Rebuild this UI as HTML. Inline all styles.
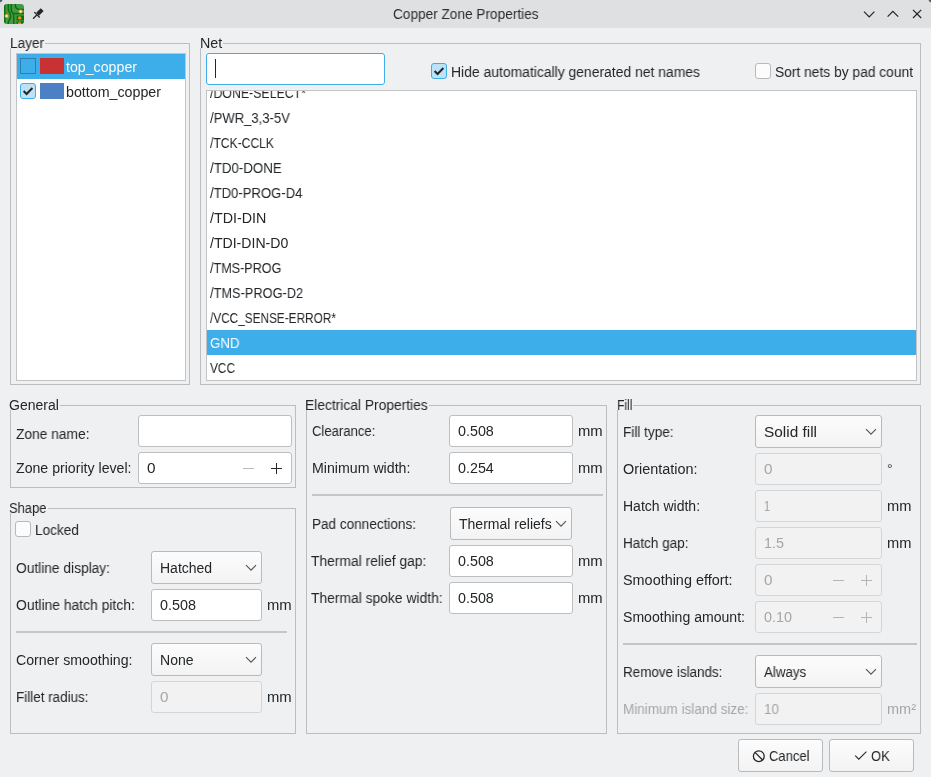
<!DOCTYPE html>
<html><head><meta charset="utf-8"><style>
html,body{margin:0;padding:0;width:931px;height:777px;overflow:hidden;background:#eff0f1;font-family:"Liberation Sans",sans-serif;position:relative;-webkit-font-smoothing:antialiased}
.t{will-change:transform}
</style></head><body>
<div style="position:absolute;left:0px;top:0px;width:931px;height:28px;box-sizing:border-box;background:#dee0e2"></div>
<div class="t" style="position:absolute;left:392.50px;top:6.00px;line-height:16px;font-size:14px;color:#2b2e31;white-space:pre;transform:scaleX(0.9738);transform-origin:0 0;">Copper Zone Properties</div>
<div style="position:absolute;left:10px;top:43px;width:180px;height:342px;box-sizing:border-box;border:1px solid #bcbdbf;"></div>
<div style="position:absolute;left:9px;top:37px;width:36px;height:11px;box-sizing:border-box;background:#eff0f1"></div>
<div class="t" style="position:absolute;left:9.50px;top:35.00px;line-height:16px;font-size:14px;color:#232629;white-space:pre;transform:scaleX(0.9763);transform-origin:0 0;">Layer</div>
<div style="position:absolute;left:200px;top:43px;width:721px;height:342px;box-sizing:border-box;border:1px solid #bcbdbf;"></div>
<div style="position:absolute;left:199px;top:37px;width:24px;height:11px;box-sizing:border-box;background:#eff0f1"></div>
<div class="t" style="position:absolute;left:199.90px;top:35.00px;line-height:16px;font-size:14px;color:#232629;white-space:pre;transform:scaleX(1.0185);transform-origin:0 0;">Net</div>
<div style="position:absolute;left:10px;top:405px;width:286px;height:83px;box-sizing:border-box;border:1px solid #bcbdbf;"></div>
<div style="position:absolute;left:9px;top:399px;width:51px;height:11px;box-sizing:border-box;background:#eff0f1"></div>
<div class="t" style="position:absolute;left:9.20px;top:397.00px;line-height:16px;font-size:14px;color:#232629;white-space:pre;transform:scaleX(0.9937);transform-origin:0 0;">General</div>
<div style="position:absolute;left:10px;top:508px;width:286px;height:226px;box-sizing:border-box;border:1px solid #bcbdbf;"></div>
<div style="position:absolute;left:9px;top:502px;width:39px;height:11px;box-sizing:border-box;background:#eff0f1"></div>
<div class="t" style="position:absolute;left:9.20px;top:500.00px;line-height:16px;font-size:14px;color:#232629;white-space:pre;transform:scaleX(0.9238);transform-origin:0 0;">Shape</div>
<div style="position:absolute;left:306px;top:405px;width:301px;height:329px;box-sizing:border-box;border:1px solid #bcbdbf;"></div>
<div style="position:absolute;left:305px;top:399px;width:124px;height:11px;box-sizing:border-box;background:#eff0f1"></div>
<div class="t" style="position:absolute;left:305.30px;top:397.00px;line-height:16px;font-size:14px;color:#232629;white-space:pre;transform:scaleX(0.9855);transform-origin:0 0;">Electrical Properties</div>
<div style="position:absolute;left:617px;top:405px;width:304px;height:329px;box-sizing:border-box;border:1px solid #bcbdbf;"></div>
<div style="position:absolute;left:616px;top:399px;width:17px;height:11px;box-sizing:border-box;background:#eff0f1"></div>
<div class="t" style="position:absolute;left:616.80px;top:397.00px;line-height:16px;font-size:14px;color:#232629;white-space:pre;transform:scaleX(0.8608);transform-origin:0 0;">Fill</div>
<div style="position:absolute;left:16px;top:53px;width:170px;height:328px;box-sizing:border-box;background:#fff;border:1px solid #c3c4c6"></div>
<div style="position:absolute;left:17px;top:54px;width:168px;height:25px;box-sizing:border-box;background:#3daee9"></div>
<div style="position:absolute;left:20px;top:58px;width:16px;height:16px;box-sizing:border-box;border:1px solid #2e7fb0;"></div>
<div style="position:absolute;left:40px;top:58px;width:24px;height:16px;box-sizing:border-box;background:#c83232"></div>
<div class="t" style="position:absolute;left:65.90px;top:59.00px;line-height:16px;font-size:14px;color:#fcfcfc;white-space:pre;transform:scaleX(1.0134);transform-origin:0 0;">top_copper</div>
<div style="position:absolute;left:20px;top:83px;width:16px;height:16px;box-sizing:border-box;background:#bde2f6;border:1px solid #3daee9;border-radius:3px"></div><svg style="position:absolute;left:20px;top:83px" width="16" height="16" viewBox="0 0 16 16"><path d="M3.6 8 L6.6 11 L12.4 5" fill="none" stroke="#232629" stroke-width="2"/></svg>
<div style="position:absolute;left:40px;top:83px;width:24px;height:16px;box-sizing:border-box;background:#4d7fc4"></div>
<div class="t" style="position:absolute;left:65.90px;top:84.00px;line-height:16px;font-size:14px;color:#232629;white-space:pre;transform:scaleX(1.0171);transform-origin:0 0;">bottom_copper</div>
<div style="position:absolute;left:206px;top:53px;width:179px;height:32px;box-sizing:border-box;background:#fff;border:1px solid #3daee9;border-radius:3px"></div>
<div style="position:absolute;left:215px;top:59px;width:1px;height:19px;box-sizing:border-box;background:#232629"></div>
<div style="position:absolute;left:431px;top:63px;width:16px;height:16px;box-sizing:border-box;background:#bde2f6;border:1px solid #3daee9;border-radius:3px"></div><svg style="position:absolute;left:431px;top:63px" width="16" height="16" viewBox="0 0 16 16"><path d="M3.6 8 L6.6 11 L12.4 5" fill="none" stroke="#232629" stroke-width="2"/></svg>
<div class="t" style="position:absolute;left:451.30px;top:64.00px;line-height:16px;font-size:14px;color:#232629;white-space:pre;transform:scaleX(0.9936);transform-origin:0 0;">Hide automatically generated net names</div>
<div style="position:absolute;left:755px;top:63px;width:16px;height:16px;box-sizing:border-box;background:#fcfcfc;border:1px solid #b8b9bb;border-radius:3px"></div>
<div class="t" style="position:absolute;left:775.00px;top:64.00px;line-height:16px;font-size:14px;color:#232629;white-space:pre;transform:scaleX(0.9851);transform-origin:0 0;">Sort nets by pad count</div>
<div style="position:absolute;left:206px;top:90px;width:711px;height:291px;box-sizing:border-box;background:#fff;border:1px solid #c3c4c6"></div>
<div style="position:absolute;left:207px;top:91px;width:709px;height:289px;overflow:hidden">
<div class="t" style="position:absolute;left:2.50px;top:-6.00px;line-height:16px;font-size:14px;color:#232629;white-space:pre;transform:scaleX(0.8814);transform-origin:0 0;">/DONE-SELECT*</div>
<div class="t" style="position:absolute;left:2.50px;top:19.00px;line-height:16px;font-size:14px;color:#232629;white-space:pre;transform:scaleX(0.9335);transform-origin:0 0;">/PWR_3,3-5V</div>
<div class="t" style="position:absolute;left:2.50px;top:44.00px;line-height:16px;font-size:14px;color:#232629;white-space:pre;transform:scaleX(0.8660);transform-origin:0 0;">/TCK-CCLK</div>
<div class="t" style="position:absolute;left:2.50px;top:69.00px;line-height:16px;font-size:14px;color:#232629;white-space:pre;transform:scaleX(0.9516);transform-origin:0 0;">/TD0-DONE</div>
<div class="t" style="position:absolute;left:2.50px;top:94.00px;line-height:16px;font-size:14px;color:#232629;white-space:pre;transform:scaleX(0.9353);transform-origin:0 0;">/TD0-PROG-D4</div>
<div class="t" style="position:absolute;left:2.50px;top:119.00px;line-height:16px;font-size:14px;color:#232629;white-space:pre;transform:scaleX(1.0196);transform-origin:0 0;">/TDI-DIN</div>
<div class="t" style="position:absolute;left:2.50px;top:144.00px;line-height:16px;font-size:14px;color:#232629;white-space:pre;transform:scaleX(1.0067);transform-origin:0 0;">/TDI-DIN-D0</div>
<div class="t" style="position:absolute;left:2.50px;top:169.00px;line-height:16px;font-size:14px;color:#232629;white-space:pre;transform:scaleX(0.8999);transform-origin:0 0;">/TMS-PROG</div>
<div class="t" style="position:absolute;left:2.50px;top:194.00px;line-height:16px;font-size:14px;color:#232629;white-space:pre;transform:scaleX(0.9147);transform-origin:0 0;">/TMS-PROG-D2</div>
<div class="t" style="position:absolute;left:2.50px;top:219.00px;line-height:16px;font-size:14px;color:#232629;white-space:pre;transform:scaleX(0.8428);transform-origin:0 0;">/VCC_SENSE-ERROR*</div>
<div style="position:absolute;left:0px;top:239px;width:709px;height:25px;box-sizing:border-box;background:#3daee9"></div>
<div class="t" style="position:absolute;left:2.50px;top:244.00px;line-height:16px;font-size:14px;color:#fcfcfc;white-space:pre;transform:scaleX(0.9478);transform-origin:0 0;">GND</div>
<div class="t" style="position:absolute;left:2.50px;top:269.00px;line-height:16px;font-size:14px;color:#232629;white-space:pre;transform:scaleX(0.8457);transform-origin:0 0;">VCC</div>
</div>
<div class="t" style="position:absolute;left:15.80px;top:426.00px;line-height:16px;font-size:14px;color:#232629;white-space:pre;transform:scaleX(0.9850);transform-origin:0 0;">Zone name:</div>
<div style="position:absolute;left:138px;top:415px;width:154px;height:32px;box-sizing:border-box;background:#fff;border:1px solid #bdbec0;border-radius:3px"></div>
<div class="t" style="position:absolute;left:15.80px;top:460.00px;line-height:16px;font-size:14px;color:#232629;white-space:pre;transform:scaleX(1.0097);transform-origin:0 0;">Zone priority level:</div>
<div style="position:absolute;left:138px;top:452px;width:154px;height:32px;box-sizing:border-box;background:#fff;border:1px solid #bdbec0;border-radius:3px"></div>
<div class="t" style="position:absolute;left:146.90px;top:460.00px;line-height:16px;font-size:14px;color:#232629;white-space:pre;transform:scaleX(1.0902);transform-origin:0 0;">0</div>
<div style="position:absolute;left:243px;top:468px;width:11px;height:1px;box-sizing:border-box;background:#b9babc"></div>
<div style="position:absolute;left:271px;top:468px;width:11px;height:1px;box-sizing:border-box;background:#232629"></div>
<div style="position:absolute;left:276px;top:463px;width:1px;height:11px;box-sizing:border-box;background:#232629"></div>
<div style="position:absolute;left:15px;top:521px;width:16px;height:16px;box-sizing:border-box;background:#fcfcfc;border:1px solid #b8b9bb;border-radius:3px"></div>
<div class="t" style="position:absolute;left:35.10px;top:522.00px;line-height:16px;font-size:14px;color:#232629;white-space:pre;transform:scaleX(0.9744);transform-origin:0 0;">Locked</div>
<div class="t" style="position:absolute;left:16.20px;top:560.00px;line-height:16px;font-size:14px;color:#232629;white-space:pre;transform:scaleX(0.9820);transform-origin:0 0;">Outline display:</div>
<div style="position:absolute;left:151px;top:551px;width:111px;height:33px;box-sizing:border-box;background:linear-gradient(#fcfcfc,#f3f3f4);border:1px solid #b9babc;border-radius:3px"></div>
<div class="t" style="position:absolute;left:159.80px;top:560.00px;line-height:16px;font-size:14px;color:#232629;white-space:pre;transform:scaleX(0.9970);transform-origin:0 0;">Hatched</div>
<svg style="position:absolute;left:245px;top:564px" width="12" height="8" viewBox="0 0 12 8"><path d="M1 1.2 L6 6.2 L11 1.2" fill="none" stroke="#55585b" stroke-width="1.2"/></svg>
<div class="t" style="position:absolute;left:16.00px;top:597.00px;line-height:16px;font-size:14px;color:#232629;white-space:pre;transform:scaleX(0.9912);transform-origin:0 0;">Outline hatch pitch:</div>
<div style="position:absolute;left:151px;top:589px;width:111px;height:32px;box-sizing:border-box;background:#fff;border:1px solid #bdbec0;border-radius:3px"></div>
<div class="t" style="position:absolute;left:159.90px;top:597.00px;line-height:16px;font-size:14px;color:#232629;white-space:pre;transform:scaleX(1.0272);transform-origin:0 0;">0.508</div>
<div class="t" style="position:absolute;left:266.70px;top:597.00px;line-height:16px;font-size:14px;color:#232629;white-space:pre;transform:scaleX(1.0588);transform-origin:0 0;">mm</div>
<div style="position:absolute;left:16px;top:631px;width:271px;height:2px;box-sizing:border-box;background:#c4c5c7"></div>
<div class="t" style="position:absolute;left:16.00px;top:652.00px;line-height:16px;font-size:14px;color:#232629;white-space:pre;transform:scaleX(1.0115);transform-origin:0 0;">Corner smoothing:</div>
<div style="position:absolute;left:151px;top:643px;width:111px;height:33px;box-sizing:border-box;background:linear-gradient(#fcfcfc,#f3f3f4);border:1px solid #b9babc;border-radius:3px"></div>
<div class="t" style="position:absolute;left:159.80px;top:652.00px;line-height:16px;font-size:14px;color:#232629;white-space:pre;transform:scaleX(1.0039);transform-origin:0 0;">None</div>
<svg style="position:absolute;left:245px;top:656px" width="12" height="8" viewBox="0 0 12 8"><path d="M1 1.2 L6 6.2 L11 1.2" fill="none" stroke="#55585b" stroke-width="1.2"/></svg>
<div class="t" style="position:absolute;left:16.00px;top:689.00px;line-height:16px;font-size:14px;color:#232629;white-space:pre;transform:scaleX(0.9607);transform-origin:0 0;">Fillet radius:</div>
<div style="position:absolute;left:151px;top:681px;width:111px;height:32px;box-sizing:border-box;background:#f2f2f3;border:1px solid #d4d5d7;border-radius:3px"></div>
<div class="t" style="position:absolute;left:159.90px;top:689.00px;line-height:16px;font-size:14px;color:#a4a6a8;white-space:pre;transform:scaleX(1.0902);transform-origin:0 0;">0</div>
<div class="t" style="position:absolute;left:266.70px;top:689.00px;line-height:16px;font-size:14px;color:#232629;white-space:pre;transform:scaleX(1.0588);transform-origin:0 0;">mm</div>
<div class="t" style="position:absolute;left:312.10px;top:423.00px;line-height:16px;font-size:14px;color:#232629;white-space:pre;transform:scaleX(0.9350);transform-origin:0 0;">Clearance:</div>
<div style="position:absolute;left:449px;top:415px;width:124px;height:32px;box-sizing:border-box;background:#fff;border:1px solid #bdbec0;border-radius:3px"></div>
<div class="t" style="position:absolute;left:457.90px;top:423.00px;line-height:16px;font-size:14px;color:#232629;white-space:pre;transform:scaleX(1.0215);transform-origin:0 0;">0.508</div>
<div class="t" style="position:absolute;left:577.70px;top:423.00px;line-height:16px;font-size:14px;color:#232629;white-space:pre;transform:scaleX(1.0588);transform-origin:0 0;">mm</div>
<div class="t" style="position:absolute;left:312.10px;top:460.00px;line-height:16px;font-size:14px;color:#232629;white-space:pre;transform:scaleX(1.0118);transform-origin:0 0;">Minimum width:</div>
<div style="position:absolute;left:449px;top:452px;width:124px;height:32px;box-sizing:border-box;background:#fff;border:1px solid #bdbec0;border-radius:3px"></div>
<div class="t" style="position:absolute;left:457.90px;top:460.00px;line-height:16px;font-size:14px;color:#232629;white-space:pre;transform:scaleX(1.0215);transform-origin:0 0;">0.254</div>
<div class="t" style="position:absolute;left:577.70px;top:460.00px;line-height:16px;font-size:14px;color:#232629;white-space:pre;transform:scaleX(1.0588);transform-origin:0 0;">mm</div>
<div style="position:absolute;left:312px;top:494px;width:291px;height:2px;box-sizing:border-box;background:#c4c5c7"></div>
<div class="t" style="position:absolute;left:311.80px;top:516.00px;line-height:16px;font-size:14px;color:#232629;white-space:pre;transform:scaleX(0.9683);transform-origin:0 0;">Pad connections:</div>
<div style="position:absolute;left:450px;top:507px;width:122px;height:33px;box-sizing:border-box;background:linear-gradient(#fcfcfc,#f3f3f4);border:1px solid #b9babc;border-radius:3px"></div>
<div class="t" style="position:absolute;left:458.80px;top:516.00px;line-height:16px;font-size:14px;color:#232629;white-space:pre;transform:scaleX(1.0022);transform-origin:0 0;">Thermal reliefs</div>
<svg style="position:absolute;left:555px;top:520px" width="12" height="8" viewBox="0 0 12 8"><path d="M1 1.2 L6 6.2 L11 1.2" fill="none" stroke="#55585b" stroke-width="1.2"/></svg>
<div class="t" style="position:absolute;left:311.20px;top:553.00px;line-height:16px;font-size:14px;color:#232629;white-space:pre;transform:scaleX(0.9878);transform-origin:0 0;">Thermal relief gap:</div>
<div style="position:absolute;left:449px;top:545px;width:124px;height:32px;box-sizing:border-box;background:#fff;border:1px solid #bdbec0;border-radius:3px"></div>
<div class="t" style="position:absolute;left:457.90px;top:553.00px;line-height:16px;font-size:14px;color:#232629;white-space:pre;transform:scaleX(1.0215);transform-origin:0 0;">0.508</div>
<div class="t" style="position:absolute;left:577.70px;top:553.00px;line-height:16px;font-size:14px;color:#232629;white-space:pre;transform:scaleX(1.0588);transform-origin:0 0;">mm</div>
<div class="t" style="position:absolute;left:311.20px;top:590.00px;line-height:16px;font-size:14px;color:#232629;white-space:pre;transform:scaleX(0.9890);transform-origin:0 0;">Thermal spoke width:</div>
<div style="position:absolute;left:449px;top:582px;width:124px;height:32px;box-sizing:border-box;background:#fff;border:1px solid #bdbec0;border-radius:3px"></div>
<div class="t" style="position:absolute;left:457.90px;top:590.00px;line-height:16px;font-size:14px;color:#232629;white-space:pre;transform:scaleX(1.0215);transform-origin:0 0;">0.508</div>
<div class="t" style="position:absolute;left:577.70px;top:590.00px;line-height:16px;font-size:14px;color:#232629;white-space:pre;transform:scaleX(1.0588);transform-origin:0 0;">mm</div>
<div class="t" style="position:absolute;left:623.00px;top:424.00px;line-height:16px;font-size:14px;color:#232629;white-space:pre;transform:scaleX(0.9688);transform-origin:0 0;">Fill type:</div>
<div style="position:absolute;left:755px;top:415px;width:127px;height:33px;box-sizing:border-box;background:linear-gradient(#fcfcfc,#f3f3f4);border:1px solid #b9babc;border-radius:3px"></div>
<div class="t" style="position:absolute;left:763.80px;top:424.00px;line-height:16px;font-size:14px;color:#232629;white-space:pre;transform:scaleX(1.0984);transform-origin:0 0;">Solid fill</div>
<svg style="position:absolute;left:865px;top:428px" width="12" height="8" viewBox="0 0 12 8"><path d="M1 1.2 L6 6.2 L11 1.2" fill="none" stroke="#55585b" stroke-width="1.2"/></svg>
<div class="t" style="position:absolute;left:623.00px;top:461.00px;line-height:16px;font-size:14px;color:#232629;white-space:pre;transform:scaleX(1.0307);transform-origin:0 0;">Orientation:</div>
<div style="position:absolute;left:755px;top:453px;width:127px;height:32px;box-sizing:border-box;background:#f2f2f3;border:1px solid #d4d5d7;border-radius:3px"></div>
<div class="t" style="position:absolute;left:763.90px;top:461.00px;line-height:16px;font-size:14px;color:#a4a6a8;white-space:pre;transform:scaleX(1.0902);transform-origin:0 0;">0</div>
<div class="t" style="position:absolute;left:887.20px;top:461.00px;line-height:16px;font-size:14px;color:#3a3d40;white-space:pre;">°</div>
<div class="t" style="position:absolute;left:623.00px;top:498.00px;line-height:16px;font-size:14px;color:#232629;white-space:pre;transform:scaleX(0.9942);transform-origin:0 0;">Hatch width:</div>
<div style="position:absolute;left:755px;top:490px;width:127px;height:32px;box-sizing:border-box;background:#f2f2f3;border:1px solid #d4d5d7;border-radius:3px"></div>
<div class="t" style="position:absolute;left:763.90px;top:498.00px;line-height:16px;font-size:14px;color:#a4a6a8;white-space:pre;transform:scaleX(0.7695);transform-origin:0 0;">1</div>
<div class="t" style="position:absolute;left:886.80px;top:498.00px;line-height:16px;font-size:14px;color:#232629;white-space:pre;transform:scaleX(1.0459);transform-origin:0 0;">mm</div>
<div class="t" style="position:absolute;left:623.00px;top:535.00px;line-height:16px;font-size:14px;color:#232629;white-space:pre;transform:scaleX(0.9672);transform-origin:0 0;">Hatch gap:</div>
<div style="position:absolute;left:755px;top:527px;width:127px;height:32px;box-sizing:border-box;background:#f2f2f3;border:1px solid #d4d5d7;border-radius:3px"></div>
<div class="t" style="position:absolute;left:763.90px;top:535.00px;line-height:16px;font-size:14px;color:#a4a6a8;white-space:pre;transform:scaleX(1.0273);transform-origin:0 0;">1.5</div>
<div class="t" style="position:absolute;left:886.80px;top:535.00px;line-height:16px;font-size:14px;color:#232629;white-space:pre;transform:scaleX(1.0459);transform-origin:0 0;">mm</div>
<div class="t" style="position:absolute;left:623.00px;top:572.00px;line-height:16px;font-size:14px;color:#232629;white-space:pre;transform:scaleX(1.0294);transform-origin:0 0;">Smoothing effort:</div>
<div style="position:absolute;left:755px;top:564px;width:127px;height:32px;box-sizing:border-box;background:#f2f2f3;border:1px solid #d4d5d7;border-radius:3px"></div>
<div class="t" style="position:absolute;left:763.90px;top:572.00px;line-height:16px;font-size:14px;color:#a4a6a8;white-space:pre;transform:scaleX(1.0902);transform-origin:0 0;">0</div>
<div style="position:absolute;left:833px;top:580px;width:11px;height:1px;box-sizing:border-box;background:#b3b4b6"></div>
<div style="position:absolute;left:861px;top:580px;width:11px;height:1px;box-sizing:border-box;background:#b3b4b6"></div>
<div style="position:absolute;left:866px;top:575px;width:1px;height:11px;box-sizing:border-box;background:#b3b4b6"></div>
<div class="t" style="position:absolute;left:623.00px;top:609.00px;line-height:16px;font-size:14px;color:#232629;white-space:pre;transform:scaleX(1.0049);transform-origin:0 0;">Smoothing amount:</div>
<div style="position:absolute;left:755px;top:601px;width:127px;height:32px;box-sizing:border-box;background:#f2f2f3;border:1px solid #d4d5d7;border-radius:3px"></div>
<div class="t" style="position:absolute;left:763.90px;top:609.00px;line-height:16px;font-size:14px;color:#a4a6a8;white-space:pre;transform:scaleX(1.0275);transform-origin:0 0;">0.10</div>
<div style="position:absolute;left:833px;top:617px;width:11px;height:1px;box-sizing:border-box;background:#b3b4b6"></div>
<div style="position:absolute;left:861px;top:617px;width:11px;height:1px;box-sizing:border-box;background:#b3b4b6"></div>
<div style="position:absolute;left:866px;top:612px;width:1px;height:11px;box-sizing:border-box;background:#b3b4b6"></div>
<div style="position:absolute;left:623px;top:643px;width:294px;height:2px;box-sizing:border-box;background:#c4c5c7"></div>
<div class="t" style="position:absolute;left:622.60px;top:664.00px;line-height:16px;font-size:14px;color:#232629;white-space:pre;transform:scaleX(0.9614);transform-origin:0 0;">Remove islands:</div>
<div style="position:absolute;left:755px;top:655px;width:127px;height:33px;box-sizing:border-box;background:linear-gradient(#fcfcfc,#f3f3f4);border:1px solid #b9babc;border-radius:3px"></div>
<div class="t" style="position:absolute;left:763.80px;top:664.00px;line-height:16px;font-size:14px;color:#232629;white-space:pre;transform:scaleX(0.9536);transform-origin:0 0;">Always</div>
<svg style="position:absolute;left:865px;top:668px" width="12" height="8" viewBox="0 0 12 8"><path d="M1 1.2 L6 6.2 L11 1.2" fill="none" stroke="#55585b" stroke-width="1.2"/></svg>
<div class="t" style="position:absolute;left:622.60px;top:701.00px;line-height:16px;font-size:14px;color:#a4a6a8;white-space:pre;transform:scaleX(0.9651);transform-origin:0 0;">Minimum island size:</div>
<div style="position:absolute;left:755px;top:693px;width:127px;height:32px;box-sizing:border-box;background:#f2f2f3;border:1px solid #d4d5d7;border-radius:3px"></div>
<div class="t" style="position:absolute;left:763.90px;top:701.00px;line-height:16px;font-size:14px;color:#a4a6a8;white-space:pre;transform:scaleX(0.9629);transform-origin:0 0;">10</div>
<div class="t" style="position:absolute;left:886.80px;top:701.00px;line-height:16px;font-size:14px;color:#a4a6a8;white-space:pre;transform:scaleX(1.0357);transform-origin:0 0;">mm²</div>
<div style="position:absolute;left:738px;top:739px;width:85px;height:33px;box-sizing:border-box;background:linear-gradient(#fcfcfc,#f3f3f4);border:1px solid #b9babc;border-radius:3px"></div>
<div style="position:absolute;left:829px;top:739px;width:85px;height:33px;box-sizing:border-box;background:linear-gradient(#fcfcfc,#f3f3f4);border:1px solid #b9babc;border-radius:3px"></div>
<svg style="position:absolute;left:752px;top:750px" width="14" height="13" viewBox="0 0 14 13"><circle cx="6.8" cy="6.2" r="5.4" fill="none" stroke="#232629" stroke-width="1.3"/><path d="M3 2.4 L10.6 10" stroke="#232629" stroke-width="1.3"/></svg>
<div class="t" style="position:absolute;left:768.80px;top:748.00px;line-height:16px;font-size:14px;color:#232629;white-space:pre;transform:scaleX(0.9290);transform-origin:0 0;">Cancel</div>
<svg style="position:absolute;left:854px;top:750px" width="14" height="12" viewBox="0 0 14 12"><path d="M1.2 5.6 L4.8 9.2 L12.4 1.6" fill="none" stroke="#232629" stroke-width="1.05"/></svg>
<div class="t" style="position:absolute;left:870.90px;top:748.00px;line-height:16px;font-size:14px;color:#232629;white-space:pre;transform:scaleX(0.9242);transform-origin:0 0;">OK</div>
<svg style="position:absolute;left:4px;top:4px" width="20" height="20" viewBox="0 0 20 20">
<defs><clipPath id="ic"><rect x="0" y="0" width="20" height="20" rx="3.2"/></clipPath></defs>
<g clip-path="url(#ic)">
<rect x="0" y="0" width="20" height="20" fill="#469a46"/>
<g stroke="#0b700b" stroke-width="1.5" fill="none">
<path d="M0.8 0 V20"/>
<path d="M4.3 0 V5 Q4.3 7 5.8 8.8 Q6.6 9.8 6.6 11.5 V13 Q6.6 14.8 5.2 16.3 Q4.3 17.3 4.3 18.5 V20"/>
<path d="M7.2 0 V5.2 Q7.2 7.4 9 9.2 Q9.8 10.2 9.8 12 V20"/>
<path d="M11.3 0 V1.5 Q11.6 5.2 15.5 5.4 H20"/>
<path d="M9.8 9.6 H20"/>
</g>
<rect x="12.6" y="11.6" width="7.4" height="4.8" fill="#0b700b"/>
<rect x="12.6" y="17.4" width="7.4" height="3" fill="#0b700b"/>
<rect x="15" y="11.6" width="1.4" height="8.8" fill="#3f903f"/>
<circle cx="2.6" cy="12" r="2" fill="#f0a030"/><circle cx="2.6" cy="12" r="1.1" fill="#fff2d0"/>
<circle cx="16.6" cy="7.5" r="2" fill="#f0a030"/><circle cx="16.6" cy="7.5" r="1.1" fill="#fff2d0"/>
<ellipse cx="15.7" cy="13.9" rx="1.9" ry="1.4" fill="#f08c14"/>
<ellipse cx="15.6" cy="19.6" rx="1.9" ry="1.3" fill="#f08c14"/>
</g></svg>
<svg style="position:absolute;left:32px;top:7px" width="13" height="13" viewBox="0 0 13 13"><path d="M4.16 5.82 L8.75 1.23 L11.57 4.05 L6.98 8.64 Z" fill="#232629"/><path d="M2.31 5.11 L7.69 10.49 M5 7.8 L1.1 11.7" stroke="#232629" stroke-width="1.3"/></svg>
<svg style="position:absolute;left:862px;top:9px" width="60" height="12" viewBox="0 0 60 12"><path d="M2 2.6 L7.2 7.8 L12.4 2.6" fill="none" stroke="#232629" stroke-width="1.2"/><path d="M25.6 7.6 L30.9 2.3 L36.2 7.6" fill="none" stroke="#232629" stroke-width="1.2"/><path d="M51 0.8 L59.2 9 M59.2 0.8 L51 9" fill="none" stroke="#232629" stroke-width="1.2"/></svg>
<div style="position:absolute;left:0px;top:0px;width:3px;height:3px;box-sizing:border-box;background:radial-gradient(circle at 0 0,#555b62 1.6px,rgba(85,91,98,0) 2.8px)"></div>
<div style="position:absolute;left:928px;top:0px;width:3px;height:3px;box-sizing:border-box;background:radial-gradient(circle at 100% 0,#555b62 1.6px,rgba(85,91,98,0) 2.8px)"></div>
</body></html>
